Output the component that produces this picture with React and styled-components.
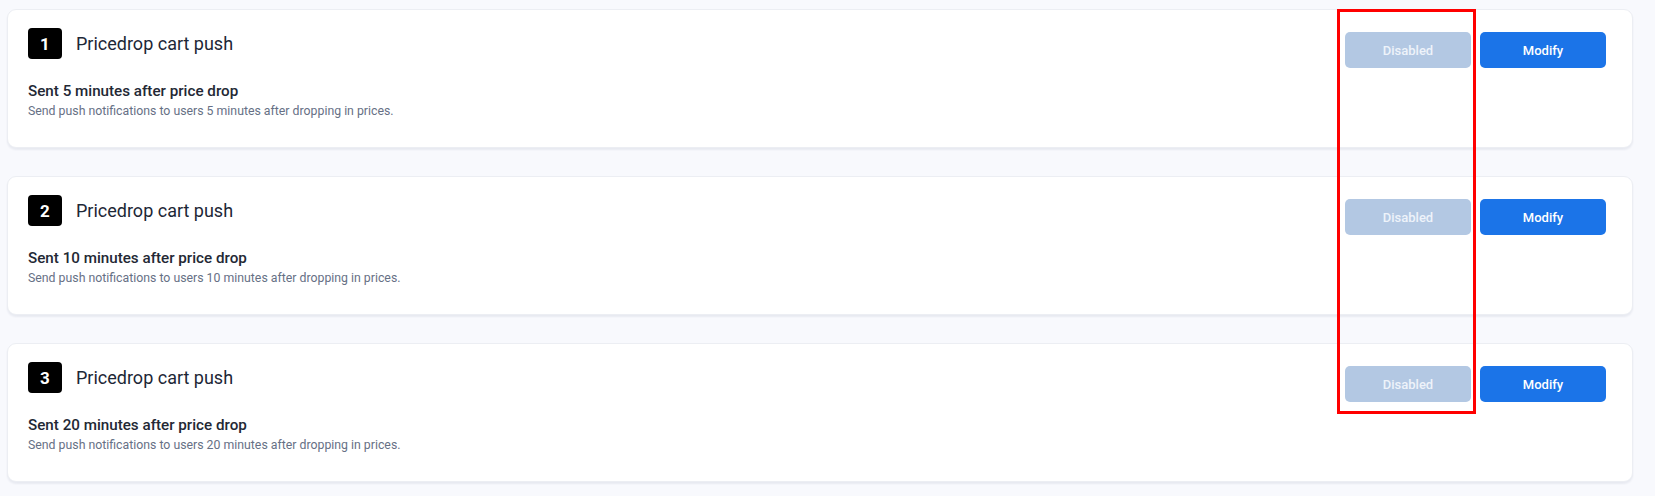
import React from "react";
import styled, { createGlobalStyle } from "styled-components";

const Global = createGlobalStyle`
  html, body { margin: 0; padding: 0; background: #f8f9fd; }
  body { font-family: Roboto, "Liberation Sans", sans-serif; }
`;

const Page = styled.div`
  position: relative;
  padding: 9px 22px 14px 7px;
  display: flex;
  flex-direction: column;
  gap: 28px;
  min-height: 496px;
  box-sizing: border-box;
`;

const Card = styled.div`
  background: #fff;
  border: 1px solid #eceef3;
  border-radius: 9px;
  box-shadow: 0 2px 2px rgba(30, 40, 80, 0.07);
  height: 139px;
  box-sizing: border-box;
  padding: 18px 26px 0 20px;
  display: flex;
  justify-content: space-between;
  align-items: flex-start;
`;

const Info = styled.div`
  display: flex;
  flex-direction: column;
`;

const Head = styled.div`
  display: flex;
  align-items: center;
  gap: 14px;
`;

const Badge = styled.div`
  width: 34px;
  height: 31px;
  border-radius: 4px;
  background: #000;
  color: #fff;
  font-size: 17px;
  font-weight: 700;
  display: flex;
  align-items: center;
  justify-content: center;
`;

const Title = styled.div`
  font-size: 18px;
  color: #1d2736;
  font-weight: 400;
`;

const Subtitle = styled.div`
  margin-top: 23px;
  font-size: 15.2px;
  font-weight: 500;
  color: #232834;
`;

const Desc = styled.div`
  margin-top: 4px;
  font-size: 12.3px;
  color: #667085;
`;

const Actions = styled.div`
  display: flex;
  gap: 9px;
  margin-top: 4px;
`;

const Button = styled.button`
  width: 126px;
  height: 36px;
  border: none;
  border-radius: 5px;
  font-family: Roboto, "Liberation Sans", sans-serif;
  font-size: 13px;
  font-weight: 500;
  background: ${(p) => (p.$variant === "disabled" ? "#b3c8e3" : "#1b74e8")};
  color: ${(p) => (p.$variant === "disabled" ? "#eef3fa" : "#fff")};
  cursor: pointer;
`;

const Highlight = styled.div`
  position: absolute;
  left: 1337px;
  top: 9px;
  width: 139px;
  height: 405px;
  box-sizing: border-box;
  border: 3px solid #ff0000;
  pointer-events: none;
`;

const items = [
  { n: 1, min: 5 },
  { n: 2, min: 10 },
  { n: 3, min: 20 },
];

export default function App() {
  return (
    <>
      <Global />
      <Page>
        {items.map((it) => (
          <Card key={it.n}>
            <Info>
              <Head>
                <Badge>{it.n}</Badge>
                <Title>Pricedrop cart push</Title>
              </Head>
              <Subtitle>Sent {it.min} minutes after price drop</Subtitle>
              <Desc>
                Send push notifications to users {it.min} minutes after dropping in prices.
              </Desc>
            </Info>
            <Actions>
              <Button $variant="disabled">Disabled</Button>
              <Button>Modify</Button>
            </Actions>
          </Card>
        ))}
        <Highlight />
      </Page>
    </>
  );
}
